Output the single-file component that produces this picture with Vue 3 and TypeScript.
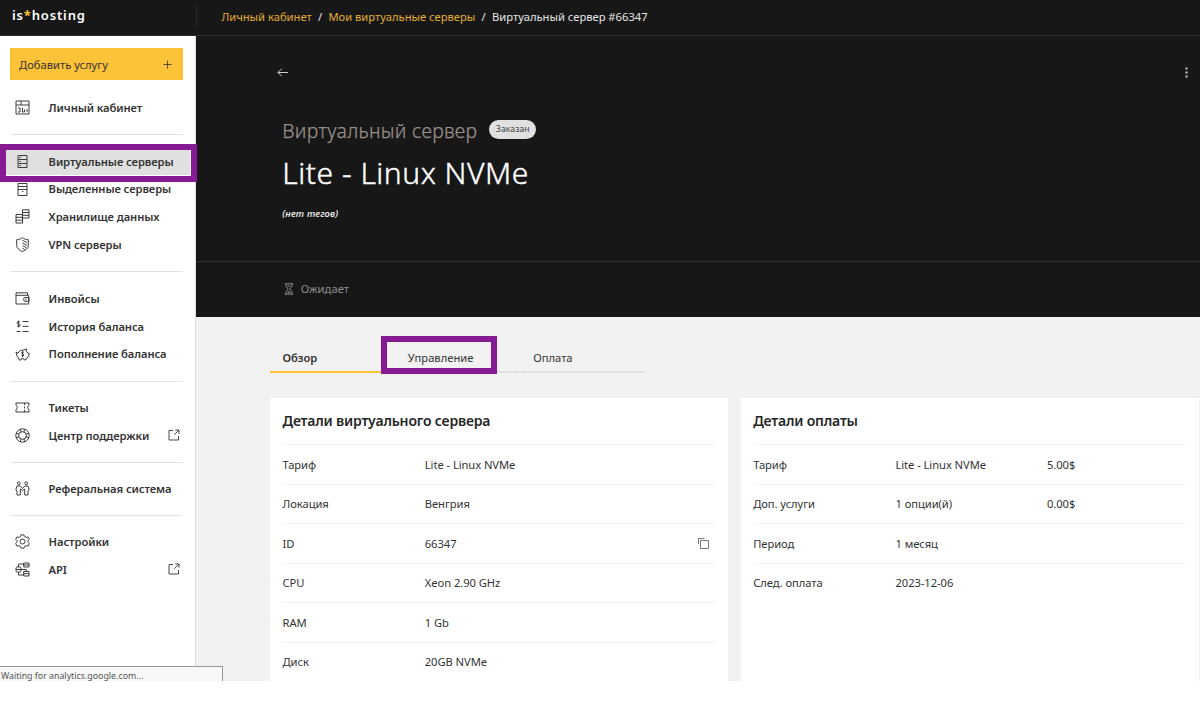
<script setup lang="ts">
interface NavItem {
  label: string
  icon: string
  active?: boolean
  external?: boolean
}

interface DetailRow {
  name: string
  value: string
  price?: string
  copy?: boolean
}

const groups: NavItem[][] = [
  [
    {
      label: 'Личный кабинет',
      icon: 'M1 1H14V14H1ZM1 5H14M6 1V5M3 8H5V12H2.8M7.5 8V12H9.5M9.5 9.5V12M12 9V12',
    },
  ],
  [
    {
      label: 'Виртуальные серверы',
      active: true,
      icon: 'M3 1.5H12V13.5H3ZM3 5.5H12M3 9.5H12M4.5 3.5H6M4.5 7.5H6M4.5 11.5H6',
    },
    {
      label: 'Выделенные серверы',
      icon: 'M3 1.5H12V13.5H3ZM3 4.5H12M3 7.5H12M7 9.5H8.3',
    },
    {
      label: 'Хранилище данных',
      icon: 'M7.5 .8H14V9H7.5ZM7.5 3.5H14M7.5 6.3H14M1 5.5H7.5V14H1ZM1 8.3H7.5M1 11.2H7.5',
    },
    {
      label: 'VPN серверы',
      icon: 'M7.5 .5C9 2 11 2.6 13.3 2.7V8.5C13.3 11.5 10.8 13 7.5 14.6C4.2 13 1.7 11.5 1.7 8.5V2.7C4 2.6 6 2 7.5 .5ZM7.5 3.3L12 5.5M7.5 6L12 8.5M7.5 8.7L11.5 10.7M7.5 11.2L9.7 12.5',
    },
  ],
  [
    {
      label: 'Инвойсы',
      icon: 'M1 2V13H13.7V4.3H1M1 1.8H12.5V4M14 6.5H9.8C8.2 6.5 8.2 10.3 9.8 10.3H14ZM10 8.4H11.5',
    },
    {
      label: 'История баланса',
      icon: 'M5 3.4C4.8 2.4 2 2.2 2 3.8C2 5.1 5.2 4.8 5.2 6.2C5.2 7.8 2 7.6 1.9 6.5M3.6 1.5V8.4M7.5 2.5H13.5M7.5 7.3H13.5M1.5 12.5H5.5M7.5 12.5H13.5',
    },
    {
      label: 'Пополнение баланса',
      icon: 'M1 5L3 6.3C4 3.7 6.2 3 8.4 3.2L11.4 1.8V4.2L13 6.2H14V9L12.4 10L11 12.8H9L8.6 11.6H6.5L6 13H4.2L3.7 10.8L2.2 9.5L1 5ZM8.8 5.2C7.6 4.6 6.4 5.3 6.8 6.4C7.1 7.2 8.8 6.9 8.8 8C8.8 9.2 7.3 9.5 6.4 8.7M7.7 4.3V10',
    },
  ],
  [
    {
      label: 'Тикеты',
      icon: 'M1 3H14V5.5C12.2 6 12.2 9 14 9.5V12H1V9.5C2.8 9 2.8 6 1 5.5ZM9.5 3V5M9.5 6.5V8.5M9.5 10V12',
    },
    {
      label: 'Центр поддержки',
      external: true,
      icon: 'M7.5 .8A6.7 6.7 0 1 1 7.5 14.2A6.7 6.7 0 1 1 7.5 .8ZM7.5 3.7A3.8 3.8 0 1 1 7.5 11.3A3.8 3.8 0 1 1 7.5 3.7ZM5.5 1.2L6 4M9.5 1.2L9 4M1.2 5.5L4 6M1.2 9.5L4 9M13.8 5.5L11 6M13.8 9.5L11 9M5.5 13.8L6 11M9.5 13.8L9 11',
    },
  ],
  [
    {
      label: 'Реферальная система',
      icon: 'M3.8 .9A1.4 1.4 0 1 1 3.8 3.7A1.4 1.4 0 1 1 3.8 .9ZM11.2 .9A1.4 1.4 0 1 1 11.2 3.7A1.4 1.4 0 1 1 11.2 .9ZM2 5H5.2L7.5 7.5L9.8 5H13L14.2 9L13 10V14H9.7V8L7.5 9.5L5.3 8V14H2V10L.8 9Z',
    },
  ],
  [
    {
      label: 'Настройки',
      icon: 'M6 .9H9L9.6 2.6L11.3 3.4L13 2.8L14.3 5.3L13 6.7V8.3L14.3 9.7L13 12.2L11.3 11.6L9.6 12.4L9 14.1H6L5.4 12.4L3.7 11.6L2 12.2L.7 9.7L2 8.3V6.7L.7 5.3L2 2.8L3.7 3.4L5.4 2.6ZM7.5 5A2.5 2.5 0 1 1 7.5 10A2.5 2.5 0 1 1 7.5 5Z',
    },
    {
      label: 'API',
      external: true,
      icon: 'M8.7 1H14V5H8.7ZM8.7 9.5H14V14H8.7ZM8.7 3H14M8.7 11.7H14M1 5.7C1 4.5 6 4.5 6 5.7V9.3C6 10.5 1 10.5 1 9.3ZM1 7.5H6M3.5 4.8V2H8.7M3.5 10.2V13H8.7M6 7.5H11.3V9.5',
    },
  ],
]

const tabs = ['Обзор', 'Управление', 'Оплата']

const serverRows: DetailRow[] = [
  { name: 'Тариф', value: 'Lite - Linux NVMe' },
  { name: 'Локация', value: 'Венгрия' },
  { name: 'ID', value: '66347', copy: true },
  { name: 'CPU', value: 'Xeon 2.90 GHz' },
  { name: 'RAM', value: '1 Gb' },
  { name: 'Диск', value: '20GB NVMe' },
]

const paymentRows: DetailRow[] = [
  { name: 'Тариф', value: 'Lite - Linux NVMe', price: '5.00$' },
  { name: 'Доп. услуги', value: '1 опции(й)', price: '0.00$' },
  { name: 'Период', value: '1 месяц' },
  { name: 'След. оплата', value: '2023-12-06' },
]
</script>

<template>
  <div class="page">
    <header class="topbar">
      <div class="logo">is<span class="star">*</span>hosting</div>
      <nav class="crumbs">
        <a>Личный кабинет</a><i>/</i><a>Мои виртуальные серверы</a><i>/</i><span>Виртуальный сервер #66347</span>
      </nav>
    </header>

    <div class="body">
      <aside class="sidebar">
        <button class="add"><span>Добавить услугу</span>
          <svg width="9" height="9" viewBox="0 0 9 9"><path d="M4.5 .5V8.5M.5 4.5H8.5" /></svg>
        </button>
        <ul v-for="(group, g) in groups" :key="g" class="group">
          <li v-for="item in group" :key="item.label" class="item" :class="{ active: item.active }">
            <svg class="icon" width="15" height="15" viewBox="0 0 15 15"><path :d="item.icon" /></svg>
            <span class="label">{{ item.label }}</span>
            <svg v-if="item.external" class="ext" width="12" height="12" viewBox="0 0 12 12">
              <path d="M5 1.5H1V11H10.5V7M7.3 1H11V4.7M11 1L6.2 5.8" />
            </svg>
          </li>
        </ul>
        <div class="marker marker-nav"></div>
      </aside>

      <main class="main">
        <section class="hero">
          <div class="toolbar">
            <svg width="12" height="9" viewBox="0 0 12 9"><path class="arrow" d="M11 4.5H1M4.6 .8L1 4.5L4.6 8.2" /></svg>
            <svg width="3" height="11" viewBox="0 0 3 11">
              <path class="dots" d="M.5 .5h2v2h-2zM.5 4.5h2v2h-2zM.5 8.5h2v2h-2z" />
            </svg>
          </div>
          <div class="kind"><span>Виртуальный сервер</span><b class="badge">Заказан</b></div>
          <h1>Lite - Linux NVMe</h1>
          <p class="tags">(нет тегов)</p>
        </section>
        <section class="status">
          <svg width="10" height="12" viewBox="0 0 10 12">
            <path d="M.8 .8H9.2M.8 11.2H9.2M2 .8V3.2L4.2 6L2 8.8V11.2M8 .8V3.2L5.8 6L8 8.8V11.2M3.5 3H6.5M5 7.5V9.5M3.5 9.7H6.5" />
          </svg>
          <span>Ожидает</span>
        </section>

        <div class="tabs">
          <div v-for="(tab, t) in tabs" :key="tab" class="tab" :class="{ current: t === 0 }">
            {{ tab }}
            <div v-if="t === 1" class="marker marker-tab"></div>
          </div>
        </div>

        <div class="cards">
          <section class="card">
            <h2>Детали виртуального сервера</h2>
            <div v-for="row in serverRows" :key="row.name" class="row">
              <span>{{ row.name }}</span><span>{{ row.value }}</span>
              <svg v-if="row.copy" class="copy" width="12" height="12" viewBox="0 0 12 12">
                <path d="M2.5 2.5H10.5V10.5H2.5ZM.5 6V.5H6.5" />
              </svg>
            </div>
          </section>
          <section class="card">
            <h2>Детали оплаты</h2>
            <div v-for="row in paymentRows" :key="row.name" class="row">
              <span>{{ row.name }}</span><span>{{ row.value }}</span><span>{{ row.price }}</span>
            </div>
          </section>
        </div>
      </main>
    </div>
    <div class="loading">Waiting for analytics.google.com...</div>
  </div>
</template>

<style>
body {
  margin: 0;
  background: #fff;
}
</style>

<style scoped>
.page {
  position: relative;
  display: flex;
  flex-direction: column;
  width: 1200px;
  height: 681px;
  overflow: hidden;
  background: #f2f2f2;
  color: #333;
  font-family: 'Noto Sans', sans-serif;
  font-size: 11.2px;
}
svg {
  flex: none;
  fill: none;
  stroke: #333;
}
.topbar {
  box-sizing: border-box;
  display: flex;
  align-items: center;
  flex: none;
  height: 36px;
  padding-bottom: 3px;
  background: #171717;
  border-bottom: 1px solid #2f2f2f;
}
.logo {
  box-sizing: border-box;
  width: 196.5px;
  height: 18px;
  padding-left: 12px;
  border-right: 1px solid #2a2a2a;
  color: #fff;
  font-size: 13px;
  font-weight: 600;
  letter-spacing: 0.85px;
  line-height: 16px;
}
.star {
  color: #fcc238;
  font-weight: 700;
}
.crumbs {
  padding-left: 24.9px;
  color: #e6e6e6;
  white-space: nowrap;
}
.crumbs a {
  color: #e3ae33;
}
.crumbs i {
  margin: 0 6.3px;
  font-style: normal;
}
.body {
  display: flex;
  flex: 1;
  min-height: 0;
}
.sidebar {
  position: relative;
  box-sizing: border-box;
  flex: none;
  width: 195.7px;
  padding: 12px 5px 0 6px;
  background: #fff;
  border-right: 1px solid #dcdcdc;
}
.add {
  box-sizing: border-box;
  display: flex;
  align-items: center;
  justify-content: space-between;
  width: 172.6px;
  height: 32.4px;
  margin: 0 0 1.6px 4px;
  padding: 0 11px 0 9px;
  border: 0;
  background: #fcc238;
  color: #333;
  font: inherit;
}
.add svg {
  stroke-width: 0.8;
}
.group {
  margin: 0;
  padding: 11.9px 0 12.5px;
  list-style: none;
}
.group + .group {
  border-top: 1px solid transparent;
  background: linear-gradient(#e2e2e2, #e2e2e2) 4px 0 / 172.6px 1px no-repeat border-box;
}
.item {
  display: flex;
  align-items: center;
  height: 27.93px;
  padding-left: 9px;
}
.item.active {
  box-sizing: border-box;
  height: 25.9px;
  margin: 2px 0 0;
  padding-bottom: 2px;
  background: #e0e0e0;
}
.icon {
  margin-right: 18.6px;
  stroke-width: 0.95;
}
.label {
  padding-top: 0.8px;
  font-size: 11.2px;
  font-weight: 600;
  letter-spacing: -0.08px;
  line-height: 16px;
  white-space: nowrap;
}
.ext {
  margin: 0 10px 1px auto;
  stroke-width: 0.9;
}
.marker {
  position: absolute;
  box-sizing: border-box;
  border: 6px solid #871b94;
}
.marker-nav {
  left: 0;
  top: 108px;
  width: 197px;
  height: 38px;
  z-index: 2;
}
.main {
  flex: 1;
  min-width: 0;
}
.hero {
  box-sizing: border-box;
  height: 225px;
  padding: 31px 12px 0 86.6px;
  background: #171717;
}
.toolbar {
  display: flex;
  align-items: center;
  justify-content: space-between;
  height: 11px;
  margin-left: -5.3px;
}
.arrow {
  stroke: #ccc;
}
.dots {
  fill: #ccc;
  stroke: none;
}
.kind {
  display: flex;
  align-items: center;
  height: 30px;
  margin-top: 37px;
  color: #999089;
  font-size: 19.4px;
  font-weight: 300;
  letter-spacing: 0.27px;
  -webkit-text-stroke: 0.25px #999089;
}
.badge {
  width: 47px;
  height: 19px;
  margin: 0 0 2px 12px;
  border-radius: 10px;
  background: #e0e0e0;
  color: #444;
  font: 8.6px/19px 'Noto Sans', sans-serif;
  letter-spacing: 0.1px;
  text-align: center;
  -webkit-text-stroke: 0;
}
h1 {
  margin: 8px 0 0;
  color: #fff;
  font-size: 30px;
  font-weight: 300;
  letter-spacing: 0.52px;
  line-height: 40px;
  -webkit-text-stroke: 0.4px #fff;
}
.tags {
  margin: 14px 0 0;
  color: #fff;
  font-size: 9.4px;
  font-style: italic;
  font-weight: 500;
  letter-spacing: 0.2px;
  line-height: 14px;
}
.status {
  box-sizing: border-box;
  display: flex;
  align-items: center;
  gap: 7px;
  height: 56.4px;
  padding: 0 0 1px 88px;
  border-top: 1px solid #303030;
  background: #171717;
  color: #8c8c8c;
  letter-spacing: 0.05px;
}
.status svg {
  stroke: #999;
  stroke-width: 0.9;
}
.status span {
  padding-bottom: 1px;
}
.tabs {
  display: flex;
  gap: 1.4px;
  padding: 27.6px 0 0 74.3px;
}
.tab {
  position: relative;
  box-sizing: border-box;
  width: 124px;
  height: 28px;
  padding-left: 12.4px;
  border-bottom: 2px solid #e0e0e0;
  line-height: 26px;
}
.tab.current {
  border-color: #fcc238;
  font-weight: 600;
}
.marker-tab {
  left: -14.4px;
  top: -9px;
  width: 116px;
  height: 38px;
}
.cards {
  display: flex;
  gap: 12.5px;
  height: 320px;
  padding: 25px 0 0 74.3px;
}
.card {
  box-sizing: border-box;
  width: 458.2px;
  padding: 0 12.5px;
  background: #fff;
}
h2 {
  height: 46.3px;
  margin: 0;
  color: #262626;
  font-size: 14px;
  font-weight: 600;
  letter-spacing: -0.18px;
  line-height: 46px;
}
.row {
  box-sizing: border-box;
  display: grid;
  grid-template-columns: 142.3px 151.5px 1fr;
  align-items: center;
  height: 39.55px;
  padding-bottom: 1.1px;
  border-top: 1px solid #f3f3f3;
  letter-spacing: -0.06px;
}
.copy {
  justify-self: end;
  margin: 1.5px 5.5px 0 0;
  stroke: #777;
}
.loading {
  position: absolute;
  left: 0;
  bottom: 0;
  z-index: 3;
  box-sizing: border-box;
  width: 223px;
  height: 15px;
  padding-left: 1px;
  border: 1px solid #929892;
  border-width: 1px 1px 0 0;
  background: #f8f8f8;
  color: #555;
  font-size: 8.8px;
  line-height: 18px;
}
</style>
